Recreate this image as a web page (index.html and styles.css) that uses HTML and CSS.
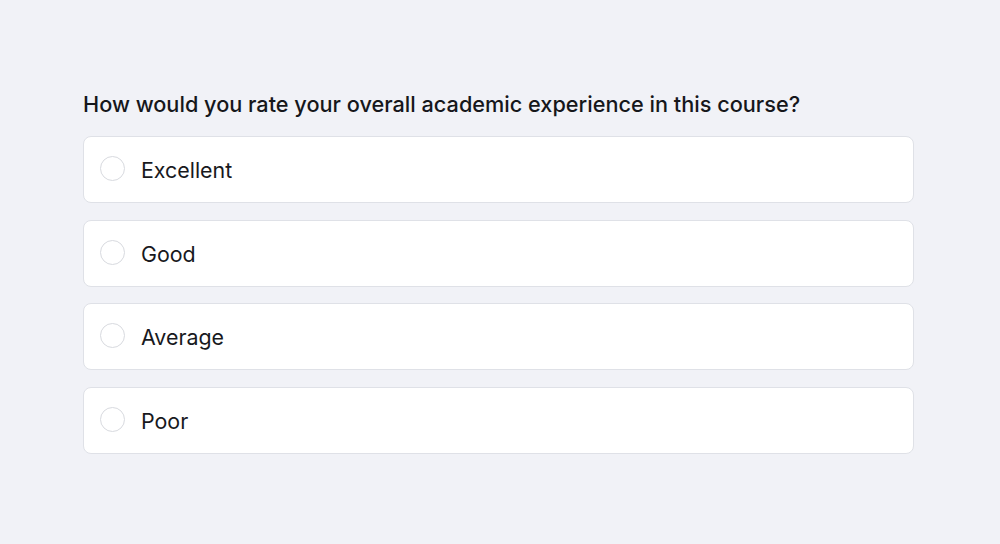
FILE: index.html
```html
<!DOCTYPE html>
<html lang="en">
<head>
<meta charset="utf-8">
<title>Course rating</title>
<link rel="stylesheet" href="styles.css">
</head>
<body>
<main class="survey">
  <h1 class="question">How would you rate your overall academic experience in this course?</h1>
  <div class="options">
    <label class="option"><span class="radio"></span><span class="label">Excellent</span></label>
    <label class="option"><span class="radio"></span><span class="label">Good</span></label>
    <label class="option"><span class="radio"></span><span class="label">Average</span></label>
    <label class="option"><span class="radio"></span><span class="label">Poor</span></label>
  </div>
</main>
</body>
</html>
```
FILE: styles.css
```css
html, body {
  margin: 0;
  padding: 0;
  background: #f1f2f7;
  font-family: Inter, "Noto Sans", sans-serif;
  color: #16171b;
}
.survey {
  width: 831px;
  padding: 90px 0 0 83px;
}
.question {
  margin: 0 0 18px 0;
  font-size: 21.7px;
  font-weight: 500;
  line-height: 28px;
}
.options {
  display: flex;
  flex-direction: column;
  gap: 16.5px;
}
.option {
  display: flex;
  align-items: center;
  gap: 16px;
  height: 65px;
  padding: 0 16px;
  background: #ffffff;
  border: 1px solid #dfe1e7;
  border-radius: 8px;
}
.radio {
  width: 23px;
  height: 23px;
  border: 1px solid #d8dadf;
  border-radius: 50%;
  background: #fff;
  flex: none;
  margin-top: -2px;
}
.label {
  font-size: 21.4px;
  line-height: 25px;
  color: #18191d;
  padding-top: 2px;
}
```
